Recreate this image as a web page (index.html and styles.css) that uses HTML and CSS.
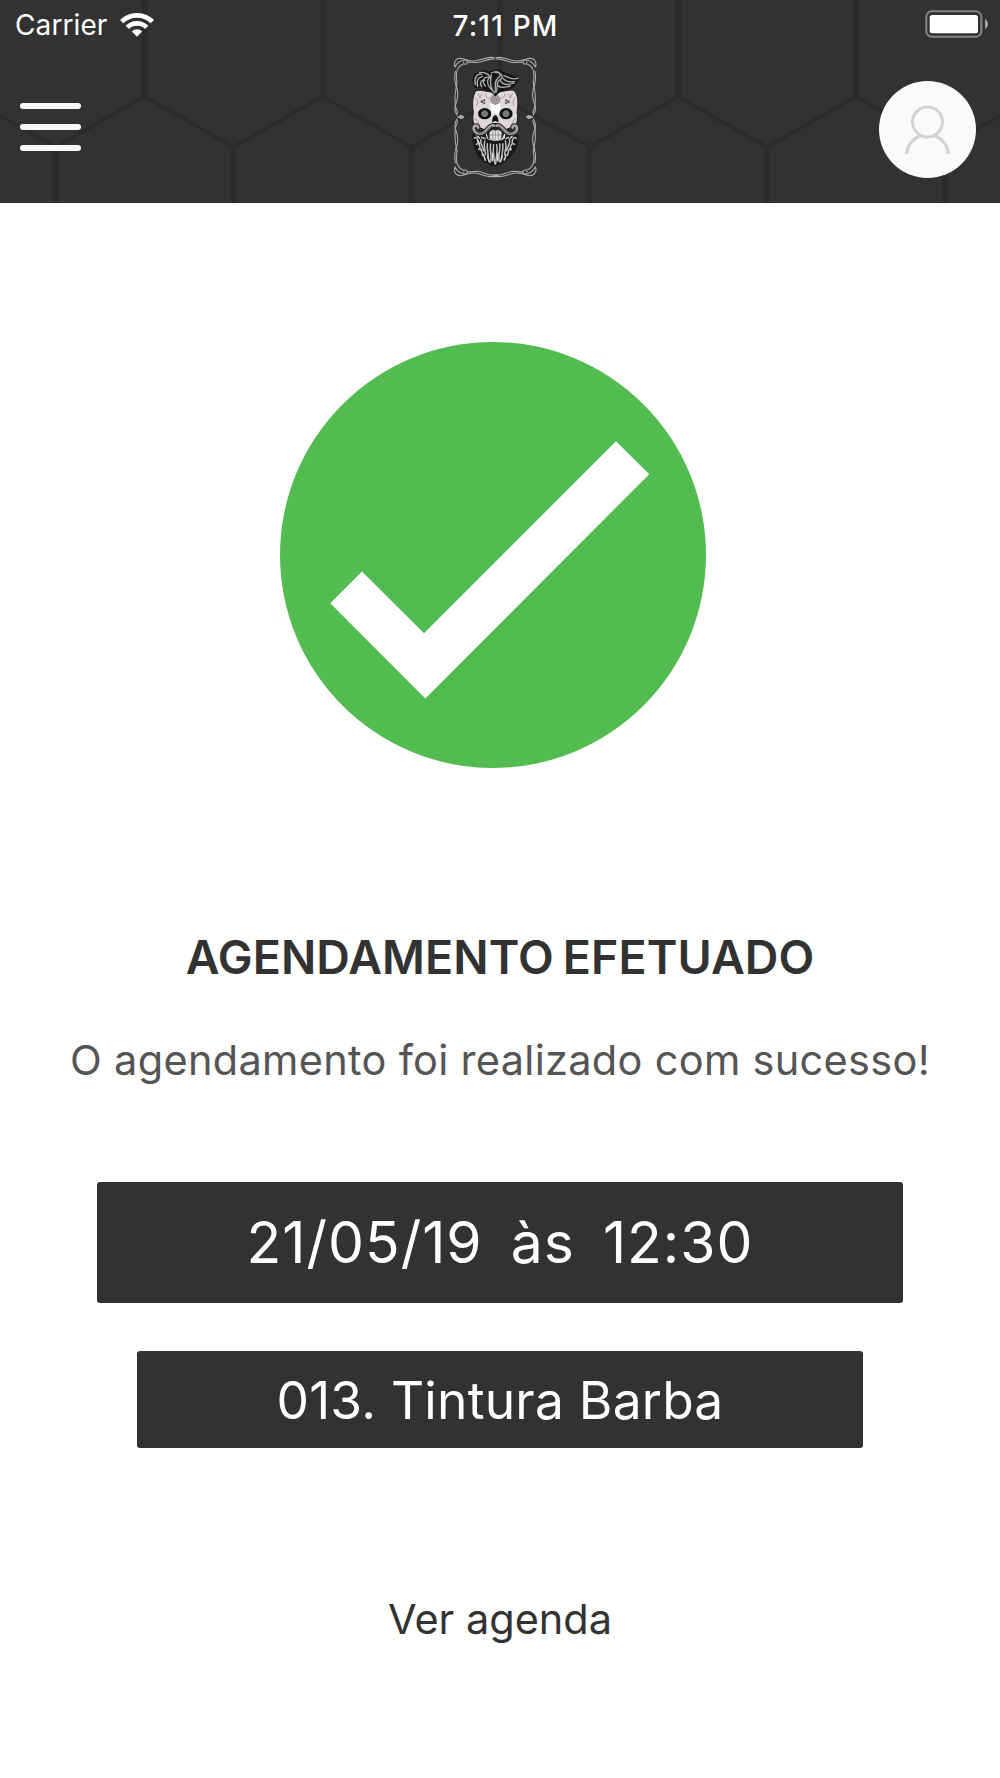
FILE: index.html
```html
<!DOCTYPE html>
<html lang="pt-BR">
<head>
  <meta charset="UTF-8">
  <meta name="viewport" content="width=device-width, initial-scale=1.0">
  <title>Agendamento efetuado</title>
  <link rel="stylesheet" href="styles.css">
</head>
<body>

  <header class="header">
    <!-- Hexagon pattern -->
    <svg class="header-pattern" viewBox="0 0 1000 203" fill="none" stroke="#2b2b2b">
      <path stroke-width="4" d="M-34 96.500 L55.500 147 L144.500 96.500 L233.500 147 L322.500 96.500 L411.500 147 L500 96.500 L589.500 147 L678 96.500 L767 147 L856 96.500 L945 147 L1034 96.500"/>
      <path stroke-width="6" d="M144.500 0V97 M322.500 0V97 M500 0V97 M678 0V97 M856 0V97 M55.500 147V203 M233.500 147V203 M411.500 147V203 M589.500 147V203 M767 147V203 M945 147V203"/>
    </svg>

    <!-- Status bar -->
    <div class="status-bar">
      <div class="carrier">
        <span>Carrier</span>
        <svg width="34" height="25" viewBox="0 0 102 75">
          <g fill="none" stroke="#fff" stroke-width="14">
            <path d="M5 29 A65 65 0 0 1 97 29"/>
            <path d="M22 46 A41 41 0 0 1 80 46"/>
          </g>
          <path fill="#fff" d="M51 74 L35.500 58.500 A22 22 0 0 1 66.500 58.500 Z"/>
        </svg>
      </div>
      <span class="clock">7:11 PM</span>
      <svg class="battery" width="64" height="28" viewBox="0 0 64 28">
        <rect x="1.300" y="1.300" width="55" height="25.400" rx="5.500" fill="none" stroke="#858585" stroke-width="2"/>
        <rect x="4.700" y="5" width="48.300" height="18.300" rx="2.500" fill="#fff"/>
        <path d="M60 9 C64 11 64 17 60 19 Z" fill="#a0a0a0"/>
      </svg>
    </div>

    <!-- Navigation -->
    <nav class="nav">
      <a class="menu" href="#" aria-label="Menu">
        <span></span>
        <span></span>
        <span></span>
      </a>

      <svg class="logo" viewBox="0 0 300 405" fill="none" stroke-linecap="round" stroke-linejoin="round">
        <!-- Ornamental frame, one half mirrored -->
        <defs>
          <g id="corner">
            <path d="M148 23 C125 18 110 32 88 33 C72 35 62 26 46 25 C30 25 25 41 30 51 C34 43 40 34 54 31 C66 28 70 33 66 39 C62 46 54 42 56 36"/>
            <path d="M148 27 C130 24 116 37 94 38 C82 38 74 34 68 38"/>
            <path d="M54 43 C38 48 34 60 34 78 C34 91 38 96 35 106 C31 122 29 150 31 166 C32 180 39 181 37 190"/>
            <path d="M31 64 C28 84 29 98 34 101 M31 103 C40 120 40 143 32 164 C27 175 30 185 36 195"/>
            <path d="M38 201 H55 M43 201 C48 192 52 200 56 201 C52 203 48 210 43 201"/>
          </g>
          <g id="side">
            <use href="#corner"/>
            <use href="#corner" transform="matrix(1 0 0 -1 0 402)"/>
          </g>
        </defs>
        <g stroke="#b0b0b0" stroke-width="3.200">
          <use href="#side"/>
          <use href="#side" transform="matrix(-1 0 0 1 301 0)"/>
          <path stroke-width="4" d="M147 375 H155 V380 H147 Z"/>
        </g>

        <!-- Beard -->
        <path fill="#191919" stroke="#191919" stroke-width="3" d="M84 254 C82 285 94 320 120 336 C132 340 143 350 152 348 C165 341 178 338 190 326 C211 308 222 280 217 256 L195 242 L108 242 Z"/>
        <g stroke="#bdbaba" stroke-width="4.500">
          <path d="M88 265 C95 258 100 268 99 280 M94 283 C100 276 106 289 106 300 M101 298 C109 289 111 306 113 316 M108 268 C103 280 114 289 116 302 M119 273 C114 290 121 302 122 314 M127 281 C124 302 132 307 129 326 M137 282 C132 295 142 313 137 335 M146 284 C142 304 147 321 150 342"/>
          <path d="M214 265 C206 258 201 268 202 280 M209 283 C200 276 195 289 196 300 M199 298 C192 289 190 306 188 316 M193 268 C198 280 187 289 185 302 M181 273 C187 290 179 302 179 314 M173 281 C176 302 169 307 171 326 M164 282 C168 295 158 313 163 335 M155 284 C159 304 153 321 152 342"/>
          <path stroke="#d9d7d6" d="M115 313 L121 331 M128 318 L133 336 M183 314 L178 330 M171 318 L167 335 M92 252 L103 264 M207 251 L196 265 M104 282 L98 271 M110 262 L120 266 M190 262 L181 266 M143 310 V332 M158 310 V332"/>
        </g>

        <!-- Skull -->
        <path fill="#ded9d9" stroke="#181818" stroke-width="3" d="M92 123 C104 116 120 126 150 126 C178 126 203 113 211 126 C222 142 219 172 216 187 C220 201 217 221 210 229 L186 237 L181 265 C171 277 133 277 124 265 L116 238 L91 228 C82 218 83 200 85 187 C81 164 82 139 92 123 Z"/>
        <path fill="#fff" d="M136 162 C144 151 158 151 167 162 L163 194 L151 188 L139 194 Z"/>
        <g stroke="#83797a" stroke-width="2">
          <path d="M99 131 L105 145 L110 132 M92 143 C99 151 100 158 95 166 M121 132 C123 143 131 147 135 145 M202 131 L196 145 L191 132 M210 143 C203 151 202 158 207 166 M180 132 C178 143 170 147 166 145 M89 206 C96 208 101 215 101 222 M213 206 C206 208 201 215 201 222"/>
        </g>
        <g fill="#4d4848">
          <circle cx="111" cy="155" r="4"/><circle cx="118" cy="151" r="3"/><circle cx="118" cy="159" r="3"/>
          <circle cx="190" cy="155" r="4"/><circle cx="183" cy="151" r="3"/><circle cx="183" cy="159" r="3"/>
        </g>
        <circle cx="151" cy="149" r="13" fill="#aaa7a7" stroke="#8f8b8b" stroke-width="4" stroke-dasharray="4 3"/>
        <circle cx="151" cy="149" r="5" stroke="#777" stroke-width="2"/>

        <!-- Eyes and nose -->
        <ellipse cx="119" cy="191" rx="20" ry="17" fill="#111"/>
        <ellipse cx="183" cy="191" rx="20" ry="17" fill="#111"/>
        <circle cx="119" cy="191" r="9" fill="#777" stroke="#999" stroke-width="2" stroke-dasharray="4 3"/>
        <circle cx="183" cy="191" r="9" fill="#777" stroke="#999" stroke-width="2" stroke-dasharray="4 3"/>
        <path fill="#111" d="M149 196 H153 C158 199 162 211 160 217 L151 213 L142 217 C140 210 144 199 149 196 Z"/>

        <!-- Moustache and teeth -->
        <path fill="#222" d="M151 219 C138 218 129 232 124 248 L130 266 H171 L179 248 C173 232 165 218 151 219 Z"/>
        <g stroke="#222" stroke-width="14">
          <path d="M147 227 C134 222 129 240 116 248 C103 256 87 248 86 235 C86 224 101 225 99 233"/>
          <path d="M155 227 C168 222 173 240 186 248 C199 256 215 248 216 235 C216 224 201 225 203 233"/>
        </g>
        <g stroke="#aaa6a5" stroke-width="8">
          <path d="M147 227 C134 222 129 240 116 248 C103 256 87 248 86 235 C86 224 101 225 99 233"/>
          <path d="M155 227 C168 222 173 240 186 248 C199 256 215 248 216 235 C216 224 201 225 203 233"/>
        </g>
        <g stroke="#333" stroke-width="1.500">
          <path d="M143 228 C134 228 129 242 116 249 C105 253 94 249 90 241"/>
          <path d="M159 228 C168 228 173 242 186 249 C197 253 208 249 212 241"/>
        </g>
        <path fill="#e2e2e2" stroke="#777" d="M134 246 L143 239 L151 242 L160 239 L170 246 L169 265 C159 272 144 272 134 265 Z"/>
        <path stroke="#777" stroke-width="2" d="M143 243 V266 M151 243 V268 M160 243 V266 M136 255 H168"/>

        <!-- Hair -->
        <path fill="#171717" stroke="#171717" stroke-width="4" d="M90 111 C82 94 83 74 95 71 C107 60 125 60 136 67 C147 57 167 59 175 69 C193 71 207 84 225 82 C211 91 218 101 206 109 C190 123 166 115 151 137 C139 118 118 121 109 112 Z"/>
        <g stroke="#b0aead" stroke-width="4">
          <path d="M91 104 C86 81 98 70 110 73 M98 109 C93 89 101 82 112 80 M103 68 C121 64 141 77 137 94 M110 110 C102 99 110 88 119 91 M121 108 C109 94 116 79 131 82 M139 119 C125 103 124 90 135 80 M148 129 C130 108 137 86 139 75"/>
          <path d="M139 69 C159 58 175 73 159 84 C148 94 151 106 151 125 M151 67 C171 67 178 83 163 91 C151 98 162 104 153 127 M177 77 C190 80 199 93 220 84 M175 85 C183 99 204 95 209 95 M166 91 C174 109 194 104 207 99 M159 107 C169 117 182 111 196 108"/>
        </g>
      </svg>

      <a class="avatar" href="#" aria-label="Perfil">
        <svg width="48" height="52" viewBox="0 0 48 52" fill="none" stroke="#d3d3d3" stroke-width="3">
          <circle cx="23.500" cy="18" r="15"/>
          <path d="M2.500 50 C3 42 8.500 35 15.500 32 M31.500 32 C38.500 35 44 42 44.500 50"/>
        </svg>
      </a>
    </nav>
  </header>

  <main class="content">
    <svg class="check" viewBox="0 0 426 426">
      <circle cx="213" cy="213" r="213" fill="#53bc51"/>
      <circle cx="213" cy="213" r="193" fill="#51bc4f"/>
      <path fill="#fff" d="M336 99.200 L369.300 132.200 L145.300 356.500 L50.300 261.200 L82 229.500 L144 291.200 Z"/>
    </svg>

    <h1>AGENDAMENTO EFETUADO</h1>
    <p class="message">O agendamento foi realizado com sucesso!</p>

    <div class="date">21/05/19&nbsp; às &nbsp;12:30</div>
    <div class="service">013. Tintura Barba</div>

    <a class="link" href="#">Ver agenda</a>
  </main>

</body>
</html>
```
FILE: styles.css
```css
body {
  font-family: Inter, "Liberation Sans", sans-serif;
  background-color: #fff;
  color: #323232;
  margin: 0;
}

a {
  color: inherit;
  text-decoration: none;
}

.header {
  position: relative;
  height: 203px;
  background-color: #323232;
  color: #fff;
}

/* Sits behind the bar contents */
.header-pattern {
  position: absolute;
  top: 0;
  left: 0;
  width: 1000px;
  height: 203px;
}

.status-bar,
.nav {
  position: relative;
  display: grid;
}

.status-bar {
  grid-template-columns: 1fr auto 1fr;
  align-items: center;
  height: 50px;
  padding: 0 11px 0 15px;
  font-size: 28px;
}

.carrier {
  display: flex;
  align-items: center;
  gap: 13px;
  letter-spacing: 0.1px;
}

.carrier svg {
  margin-bottom: 2px;
}

.clock {
  padding: 2px 0 0 7px;
  font-weight: 500;
  font-size: 28px;
  letter-spacing: 1.200px;
}

.battery {
  justify-self: end;
  margin-bottom: 2px;
}

.nav {
  grid-template-columns: 1fr 100px 1fr;
  align-items: start;
  height: 135px;
  padding: 0 24px 0 14px;
}

.menu {
  display: flex;
  flex-direction: column;
  gap: 15.300px;
  width: 61px;
  margin: 52.500px 0 0 6px;
}

.menu span {
  height: 6px;
  border-radius: 3px;
  background-color: #f8f8f8;
}

.logo {
  width: 100px;
  height: 135px;
}

.avatar {
  display: flex;
  justify-content: center;
  align-items: center;
  justify-self: end;
  width: 97px;
  height: 97px;
  margin-top: 31px;
  border-radius: 50%;
  background-color: #fafafa;
}

.content {
  display: flex;
  flex-direction: column;
  align-items: center;
}

.check {
  width: 426px;
  height: 426px;
  margin: 139px 14px 0 0;
}

h1 {
  margin: 158.500px 0 0;
  font-size: 46.500px;
  font-weight: 600;
  line-height: 60px;
  letter-spacing: 0.100px;
  word-spacing: -3px;
  white-space: nowrap;
}

.message {
  margin: 46px 0 0;
  font-size: 41.500px;
  line-height: 54px;
  letter-spacing: 0.300px;
  color: #555;
  white-space: nowrap;
}

.date,
.service {
  display: flex;
  justify-content: center;
  align-items: center;
  border-radius: 3px;
  background-color: #323232;
  color: #fff;
  white-space: pre;
}

.date {
  width: 806px;
  height: 121px;
  margin-top: 95.500px;
  font-size: 57px;
  letter-spacing: 1px;
  word-spacing: -3px;
}

.service {
  width: 726px;
  height: 97px;
  margin-top: 48px;
  font-size: 51.500px;
  letter-spacing: 0.200px;
}

.link {
  margin-top: 144px;
  font-size: 41.500px;
  line-height: 54px;
}
```
